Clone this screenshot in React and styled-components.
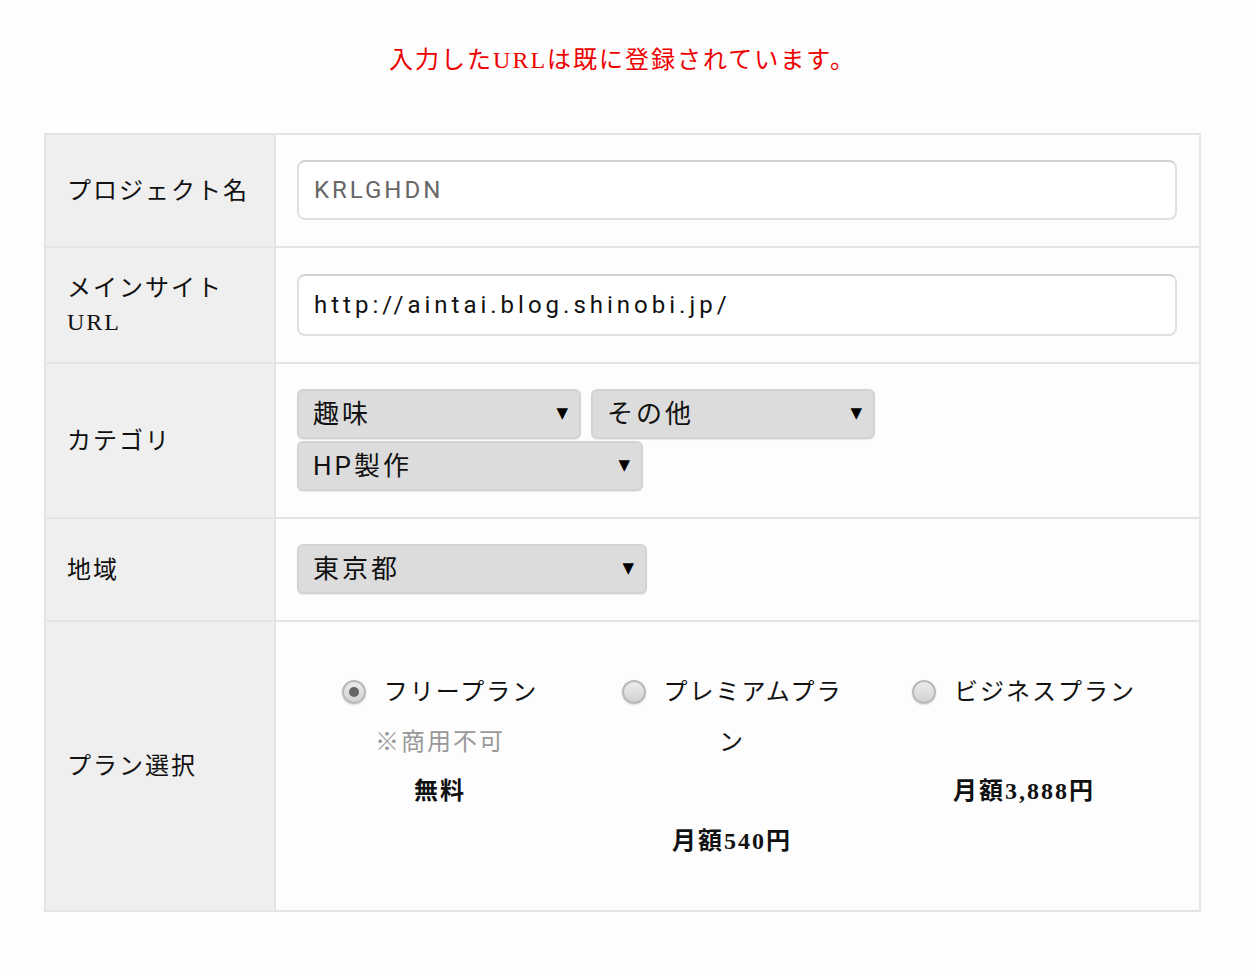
import React from "react";
import styled, { createGlobalStyle } from "styled-components";

const GlobalStyle = createGlobalStyle`
  body {
    margin: 0;
    background: #fdfdfd;
    font-family: "Liberation Serif", "Noto Sans CJK JP", serif;
    font-size: 24px;
    letter-spacing: 2px;
    color: #111;
  }
`;

const Page = styled.div`
  width: 1157px;
  padding: 43px 0 0 44px;
`;

const ErrorMessage = styled.p`
  margin: 0 0 56px;
  text-align: center;
  line-height: 34px;
  color: #ee0000;
`;

const Table = styled.div`
  border: 2px solid #e4e4e4;
`;

const Row = styled.div`
  display: grid;
  grid-template-columns: 230px 1fr;
  & + & {
    border-top: 2px solid #e4e4e4;
  }
`;

const Label = styled.div`
  display: flex;
  align-items: center;
  padding: 23px 21px;
  background: #efefef;
  border-right: 2px solid #e4e4e4;
  line-height: 34px;
`;

const Cell = styled.div`
  display: flex;
  align-items: center;
  flex-wrap: wrap;
  column-gap: 10px;
  row-gap: 2px;
  padding: 25px 22px 26px 21px;
`;

const TextInput = styled.input`
  box-sizing: border-box;
  width: 100%;
  height: ${(p) => p.$h || 60}px;
  padding: 0 15px;
  border: 2px solid #e0e0e0;
  border-top-color: #d2d2d2;
  border-radius: 8px;
  background: #fff;
  font-family: Roboto, "Noto Sans CJK JP", sans-serif;
  font-size: 24px;
  letter-spacing: 4px;
  color: #111;
  outline: none;
  &::placeholder {
    color: #666;
    letter-spacing: 3px;
  }
`;

const SelectWrap = styled.span`
  position: relative;
  display: inline-block;
  &::after {
    content: "▼";
    position: absolute;
    right: 13px;
    top: 50%;
    transform: translateY(-54%);
    font-family: "DejaVu Sans", sans-serif;
    font-size: 15px;
    letter-spacing: 0;
    color: #000;
    pointer-events: none;
  }
`;

const Select = styled.select`
  box-sizing: border-box;
  appearance: none;
  width: ${(p) => p.$w}px;
  height: 50px;
  padding: 0 30px 0 14px;
  border: 2px solid #d3d3d3;
  border-radius: 6px;
  background: #dcdcdc;
  box-shadow: 0 1px 1px rgba(0, 0, 0, 0.08);
  font-family: Roboto, "Noto Sans CJK JP", sans-serif;
  font-size: 26px;
  letter-spacing: 3px;
  color: #111;
  outline: none;
`;

const PlanCell = styled.div`
  display: grid;
  grid-template-columns: repeat(3, 292px);
  align-content: start;
  padding: 46px 0 44px 18px;
`;

const Plan = styled.label`
  box-sizing: border-box;
  padding: 0 24px;
  text-align: center;
  line-height: 49.5px;
`;

const Radio = styled.input.attrs({ type: "radio" })`
  appearance: none;
  box-sizing: border-box;
  display: inline-block;
  vertical-align: -4px;
  width: 24px;
  height: 24px;
  margin: 0 18px 0 0;
  border: 2px solid #b9b9b9;
  border-radius: 50%;
  background: linear-gradient(#ececec, #d2d2d2);
  box-shadow: 0 1px 2px rgba(0, 0, 0, 0.15);
  position: relative;
  &:checked::after {
    content: "";
    position: absolute;
    left: 5px;
    top: 5px;
    width: 10px;
    height: 10px;
    border-radius: 50%;
    background: #666;
  }
`;

const Line = styled.div`
  min-height: 49.5px;
  color: ${(p) => p.$color || "#111"};
  font-weight: ${(p) => (p.$bold ? 700 : 400)};
`;

const plans = [
  { name: "フリープラン", note: "※商用不可", price: "無料", checked: true },
  { name: "プレミアムプラン", note: "", price: "月額540円" },
  { name: "ビジネスプラン", note: "", price: "月額3,888円" },
];

export default function App() {
  return (
    <>
      <GlobalStyle />
      <Page>
        <ErrorMessage>入力したURLは既に登録されています。</ErrorMessage>
        <Table>
          <Row>
            <Label>プロジェクト名</Label>
            <Cell>
              <TextInput placeholder="KRLGHDN" />
            </Cell>
          </Row>
          <Row>
            <Label>
              メインサイト
              <br />
              URL
            </Label>
            <Cell>
              <TextInput $h={62} defaultValue="http://aintai.blog.shinobi.jp/" />
            </Cell>
          </Row>
          <Row>
            <Label>カテゴリ</Label>
            <Cell>
              <SelectWrap>
                <Select $w={284} defaultValue="趣味">
                  <option>趣味</option>
                </Select>
              </SelectWrap>
              <SelectWrap>
                <Select $w={284} defaultValue="その他">
                  <option>その他</option>
                </Select>
              </SelectWrap>
              <SelectWrap>
                <Select $w={346} defaultValue="HP製作">
                  <option>HP製作</option>
                </Select>
              </SelectWrap>
            </Cell>
          </Row>
          <Row>
            <Label>地域</Label>
            <Cell>
              <SelectWrap>
                <Select $w={350} defaultValue="東京都">
                  <option>東京都</option>
                </Select>
              </SelectWrap>
            </Cell>
          </Row>
          <Row>
            <Label>プラン選択</Label>
            <PlanCell>
              {plans.map((p) => (
                <Plan key={p.name}>
                  <Line>
                    <Radio name="plan" defaultChecked={p.checked} />
                    {p.name}
                  </Line>
                  <Line $color="#999">{p.note}</Line>
                  <Line $bold>{p.price}</Line>
                </Plan>
              ))}
            </PlanCell>
          </Row>
        </Table>
      </Page>
    </>
  );
}
